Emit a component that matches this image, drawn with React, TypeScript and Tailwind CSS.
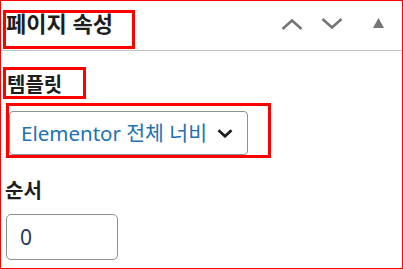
import React from 'react';

const font = { fontFamily: '"Noto Sans", "Noto Sans CJK KR", sans-serif' };

const ChevronUp = () => (
  <svg width="22" height="12" viewBox="0 0 22 12" fill="none">
    <polyline points="1.5,11 11,2.5 20.5,11" stroke="#757575" strokeWidth="2.6" />
  </svg>
);

const ChevronDown = () => (
  <svg width="22" height="12" viewBox="0 0 22 12" fill="none">
    <polyline points="1.5,1 11,9.5 20.5,1" stroke="#757575" strokeWidth="2.6" />
  </svg>
);

const Triangle = () => (
  <svg width="11" height="10" viewBox="0 0 11 10">
    <polygon points="0,10 5.5,0 11,10" fill="#757575" />
  </svg>
);

export default function App() {
  return (
    <div className="w-[403px] h-[269px] border border-[#ff0000] bg-white text-[#1e1e1e]" style={font}>
      {/* panel header */}
      <div className="flex items-start h-[50px] border-b border-[#c3c4c7]">
        <div className="ml-[2px] mt-[9px] w-[132px] h-[39px] border-[3px] border-[#ff0000] text-[22px] font-bold leading-[21px] whitespace-nowrap">
          페이지 속성
        </div>
        <div className="ml-auto mr-[18px] mt-[17px] flex items-start">
          <ChevronUp />
          <div className="ml-[18px]">
            <ChevronDown />
          </div>
          <div className="ml-[30px]">
            <Triangle />
          </div>
        </div>
      </div>

      {/* template */}
      <div className="ml-[2px] mt-[16px] w-[83px] h-[32px] border-[3px] border-[#ff0000] pl-[1px] text-[20px] font-bold leading-[30px] whitespace-nowrap">
        템플릿
      </div>
      <div className="ml-[5px] mt-[4px] w-[265px] h-[55px] border-[3px] border-[#ff0000] pt-[5px]">
        <div className="w-[239px] h-[44px] border border-[#8c8f94] rounded-[4px] flex items-center pl-[11px] pr-[14px]">
          <span className="text-[20.5px] text-[#2271b1] leading-none whitespace-nowrap">Elementor 전체 너비</span>
          <svg className="ml-auto" width="16" height="9" viewBox="0 0 16 9" fill="none">
            <polyline points="1.5,1.2 8,7.2 14.5,1.2" stroke="#1e1e1e" strokeWidth="2.8" />
          </svg>
        </div>
      </div>

      {/* order */}
      <div className="ml-[4px] mt-[20px] text-[20px] font-bold leading-[26px]">순서</div>
      <div className="ml-[5px] mt-[10px] w-[112px] h-[46px] border border-[#8c8f94] rounded-[5px] flex items-center pl-[13px]">
        <span className="text-[21px] text-[#253b5e] leading-none">0</span>
      </div>
    </div>
  );
}
